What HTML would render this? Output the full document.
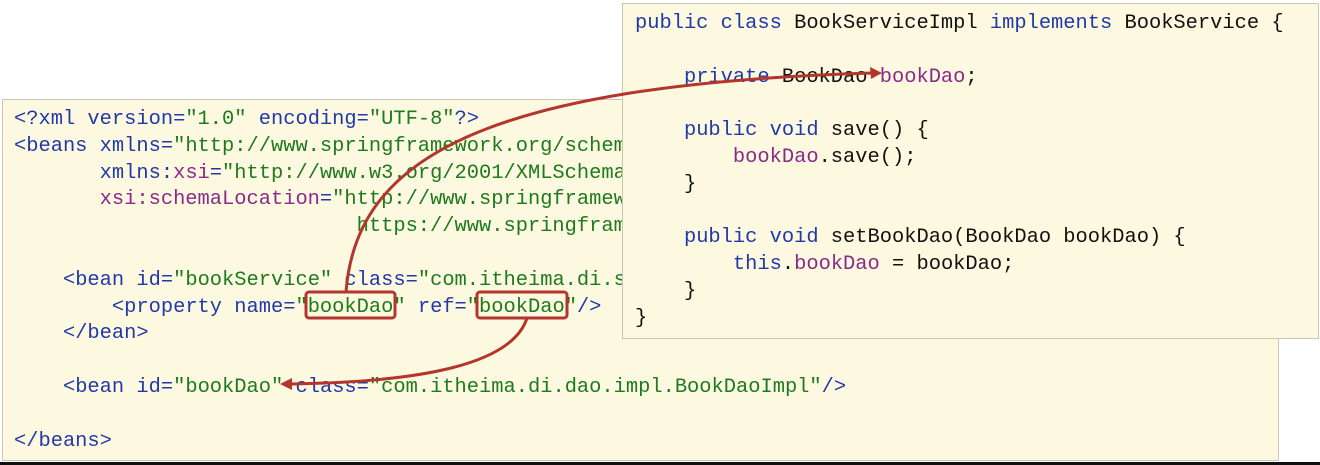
<!DOCTYPE html>
<html><head><meta charset="utf-8"><style>
html,body{margin:0;padding:0;width:1320px;height:465px;background:#fff;overflow:hidden;position:relative}
.box{position:absolute;background:#fdf9e0;border:1px solid #c9c6b4;box-sizing:border-box}
pre{margin:0;font-family:"Liberation Mono",monospace;font-size:20.4px;line-height:26.8px;color:#111;white-space:pre;position:absolute}
.k{color:#2139a8}.s{color:#1d7a1d}.p{color:#8a2a8a}
</style></head><body>
<div class="box" style="left:2px;top:99px;width:1277px;height:362px;overflow:hidden">
<pre style="left:11px;top:7px"><span class="k">&lt;?xml version=</span><span class="s">"1.0"</span> <span class="k">encoding=</span><span class="s">"UTF-8"</span><span class="k">?&gt;</span>
<span class="k">&lt;beans xmlns=</span><span class="s">"http://www.springframework.org/schema/beans"</span>
       <span class="k">xmlns:</span><span class="p">xsi</span><span class="k">=</span><span class="s">"http://www.w3.org/2001/XMLSchema-instance"</span>
       <span class="p">xsi:schemaLocation</span><span class="k">=</span><span class="s">"http://www.springframework.org/schema/beans</span>
<span class="s">                            https://www.springframework.org/schema/beans/spring-beans.xsd"</span><span class="k">&gt;</span>

    <span class="k">&lt;bean id=</span><span class="s">"bookService"</span> <span class="k">class=</span><span class="s">"com.itheima.di.service.impl.BookServiceImpl"</span><span class="k">&gt;</span>
        <span class="k">&lt;property name=</span><span class="s">"bookDao"</span> <span class="k">ref=</span><span class="s">"bookDao"</span><span class="k">/&gt;</span>
    <span class="k">&lt;/bean&gt;</span>

    <span class="k">&lt;bean id=</span><span class="s">"bookDao"</span> <span class="k">class=</span><span class="s">"com.itheima.di.dao.impl.BookDaoImpl"</span><span class="k">/&gt;</span>

<span class="k">&lt;/beans&gt;</span></pre>
</div>
<div class="box" style="left:622px;top:3px;width:697px;height:336px">
<pre style="left:12px;top:7px"><span class="k">public class</span> BookServiceImpl <span class="k">implements</span> BookService {

    <span class="k">private</span> BookDao <span class="p">bookDao</span>;

    <span class="k">public void</span> save() {
        <span class="p">bookDao</span>.save();
    }

    <span class="k">public void</span> setBookDao(BookDao bookDao) {
        <span class="k">this</span>.<span class="p">bookDao</span> = bookDao;
    }
}</pre>
</div>
<div style="position:absolute;left:0;top:462px;width:1320px;height:3px;background:#111"></div>
<svg width="1320" height="465" style="position:absolute;left:0;top:0">
<g fill="none" stroke="#b3352c" stroke-width="3">
<rect x="306" y="292" width="89" height="26" rx="3"/>
<rect x="477" y="292" width="90" height="26" rx="3"/>
<path d="M346,292 C356,160 480,85 872,73"/>
<path d="M527,318 C512,365 420,382 290,384"/>
</g>
<g fill="#b3352c">
<path d="M882,73 L870,67 L871,79 Z"/>
<path d="M280,384 L292,378 L292,390 Z"/>
</g>
</svg>
</body></html>
